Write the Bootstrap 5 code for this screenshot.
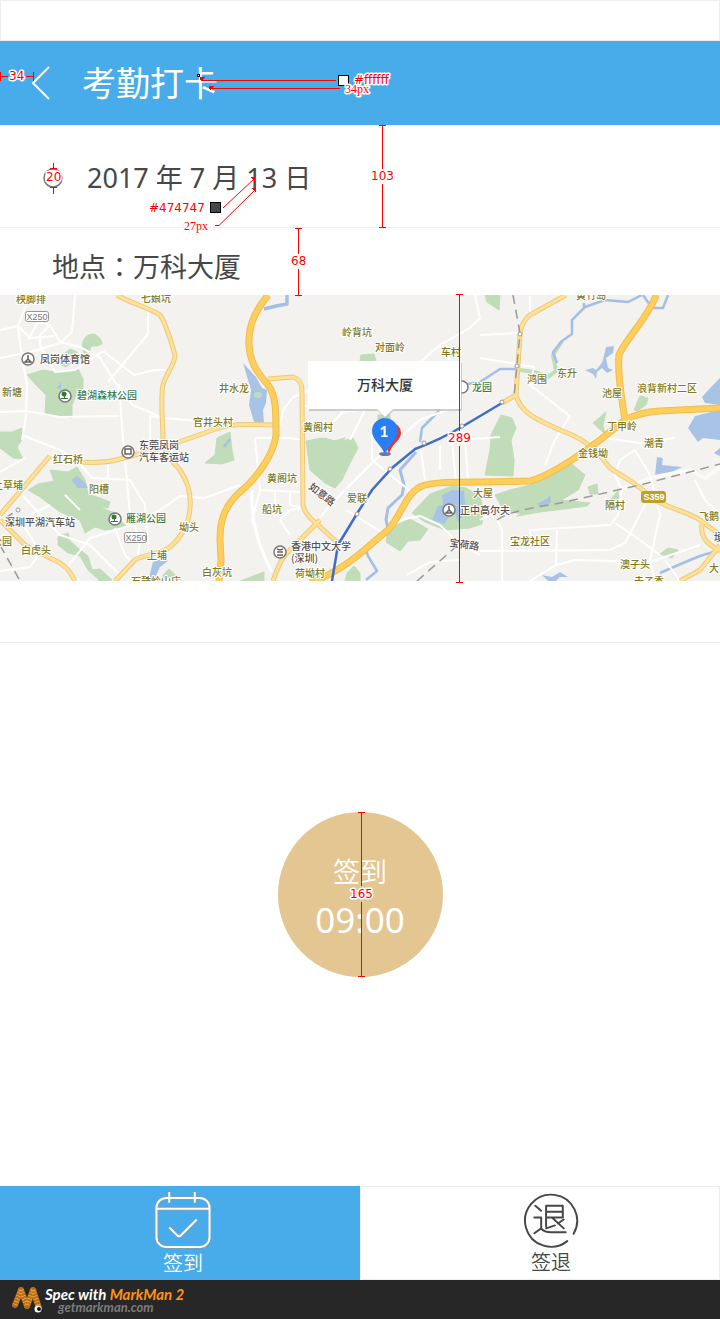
<!DOCTYPE html>
<html lang="zh-CN">
<head>
<meta charset="utf-8">
<meta name="viewport" content="width=device-width, initial-scale=1">
<title>考勤打卡</title>
<link href="https://cdn.jsdelivr.net/npm/bootstrap@5.3.0/dist/css/bootstrap.min.css" rel="stylesheet">
<style>
  body { font-family: "Noto Sans", "Noto Sans CJK SC", sans-serif; color: #474747; background: #fff; }
  .status-strip { height: 41px; border: 1px solid #eee; }
  .bg-sky { background: #49acea; color: #fff; }
  .app-bar { height: 84px; padding-left: 32px; gap: 32px; }
  .app-title { font-size: 34px; line-height: 40px; font-weight: 400; }
  .line-below { border-bottom: 1px solid #ededed; }
  .date-row { height: 103px; padding: 4px 0 0 43px; gap: 24px; }
  .place-row { height: 67px; padding: 12px 0 0 52px; }
  .row-text { font-size: 27px; line-height: 36px; font-weight: 400; }
  .mid-colon { font-family: "Noto Sans CJK TC", sans-serif; }
  .map-box .map-view { display: block; width: 100%; height: 286px; }
  .gap-row { height: 62px; }
  .punch-area { padding-bottom: 40px; }
  .punch-btn { width: 165px; height: 165px; background: #e3c692; color: #fff; border: 0; padding-top: 8px; }
  .punch-word { font-size: 27px; line-height: 44px; font-weight: 350; }
  .punch-time { font-size: 35px; line-height: 52px; font-weight: 400; }
  .tab-btn { height: 94px; border: 0; font-size: 20px; line-height: 30px; padding-top: 6px; padding-right: 2px; font-weight: 350; }
  .tab-off { background: #fff; color: #474747; border: 1px solid #eee; }
  .spec-bar { min-height: 39px; background: #272727; padding-left: 12px; gap: 2px; font-family: Lato, sans-serif; font-style: italic; font-weight: 700; }
  .spec-name { font-size: 15px; line-height: 14px; color: #fff; }
  .spec-name span { color: #ff9211; }
  .spec-link { font-size: 13px; line-height: 12px; color: #7c7c7c; padding-left: 13px; }
  .mark-layer { pointer-events: none; overflow: visible; z-index: 1; font: 12px "DejaVu Sans", sans-serif; }
  .mark-layer text { fill: #f00; stroke: #fff; stroke-width: 3px; paint-order: stroke; stroke-linejoin: round; }
  .mark-layer .size-note { font: 12px "Liberation Serif", serif; }
  .mark-layer path { stroke: #f00; fill: none; shape-rendering: crispEdges; }
  .mark-layer .slanted { shape-rendering: auto; }
  .mark-layer .tip { fill: #f00; stroke: none; }
  .village { fill: #7e7a1d; }
  .site { fill: #57504d; }
  .park { fill: #3f7b4b; }
  .map-label text { font: 500 10px "Noto Sans CJK SC", sans-serif; stroke: #fff; stroke-width: 2px; paint-order: stroke; stroke-linejoin: round; }
</style>
<script src="https://cdn.jsdelivr.net/npm/bootstrap@5.3.0/dist/js/bootstrap.bundle.min.js"></script>
</head>
<body>
<div class="d-flex flex-column min-vh-100">
  <div class="status-strip"></div>

  <header class="app-bar bg-sky d-flex align-items-center position-relative">
    <button type="button" class="btn p-0 border-0 lh-1" aria-label="返回">
      <svg width="18" height="34" viewBox="0 0 18 34" fill="none" stroke="#fff" stroke-width="2"><path d="M17 1 1 17l16 16"/></svg>
    </button>
    <h1 class="app-title m-0">考勤打卡</h1>
    <svg class="mark-layer position-absolute top-0 start-0" width="400" height="84" viewBox="0 41 400 84" aria-hidden="true">
      <path d="M0 76.500H8M26 76.500H34M.5 72V81M33.500 72V81M202 80.500H336M212 88.500H340"/>
      <path class="tip" d="M200 77h5l-4 5zM209 86h5l-4 5z"/>
      <rect x="197.500" y="74.500" width="2" height="2" fill="#fff" stroke="#000"/>
      <rect x="338.500" y="75.500" width="10" height="10" fill="#fff" stroke="#000"/>
      <text x="9" y="80">34</text>
      <text x="345" y="93" class="size-note">34px</text>
      <text x="354" y="84">#ffffff</text>
    </svg>
  </header>

  <main class="d-flex flex-column flex-grow-1">
    <section class="date-row line-below d-flex align-items-center position-relative">
      <svg width="20" height="20" viewBox="0 0 20 20" fill="none" stroke="#777" stroke-width="1.500" aria-hidden="true"><circle cx="10" cy="10" r="9"/></svg>
      <time class="row-text" datetime="2017-07-13">2017 年 7 月 13 日</time>
      <svg class="mark-layer position-absolute top-0 start-0" width="400" height="103" viewBox="0 125 400 103" aria-hidden="true">
        <path d="M53.500 163V168M50 168.500H57M50 187.500H57M53.500 188V194M382.500 125V169M382.500 184V227M379 125.500H386M379 227.500H386"/>
        <path class="slanted" d="M223 208 254 179M215 225.500H219L255 190"/>
        <path class="tip" d="M250 177h5v5zM251 188h5v5z"/>
        <rect x="210.500" y="202.500" width="10" height="10" fill="#474747" stroke="#000"/>
        <text x="46" y="181">20</text>
        <text x="371" y="180">103</text>
        <text x="149" y="212">#474747</text>
        <text x="184" y="230" class="size-note">27px</text>
      </svg>
    </section>

    <section class="place-row position-relative">
      <p class="row-text m-0 pt-2">地点<span class="mid-colon" lang="zh-TW">：</span>万科大厦</p>
      <svg class="mark-layer position-absolute top-0 start-0" width="400" height="67" viewBox="0 228 400 67" aria-hidden="true">
        <path d="M298.500 228V254M298.500 269V295M295 228.500H302M295 295.500H302"/>
        <text x="291" y="265">68</text>
      </svg>
    </section>

    <section class="map-box position-relative" aria-label="地图">
      <svg class="map-view" viewBox="0 295 720 286" preserveAspectRatio="xMidYMid slice">
        <rect y="295" width="720" height="286" fill="#f4f2ef"/>
        <g fill="#c1dcb9" stroke="#c1dcb9" stroke-linejoin="round">
          <path d="M27 375 43 370 60 373 78 369 83 379 83 388 77 393 72 405 72 418 45 415 46 395 37 386z"/>
          <path d="M82 347Q83 334 94 334 102 338 102 344 97 347 91 346L89 354 84 353z"/>
          <path d="M60 357 70 349 77 352 74 361 66 367 58 363z"/>
          <path d="M0 432 12 432 22 428 22 440 17 447 22 457 24 459 13 458 0 448z"/>
          <path d="M28 490 38 484 54 481 50 470 68 472 77 467 85 480 88 494 100 498 110 502 108 508 100 508 119 514 120 520 127 527 105 530 95 527 85 533 80 520 60 512 40 497z"/>
          <path d="M58 537 68 533 70 541 78 548 88 556 92 570 100 569 112 580 100 581 88 570 80 556 68 553 58 545z"/>
          <path d="M217 438 230 432 232 450 234 460 222 464 205 463 215 455zM163 575 169 569 182 581H163z"/>
          <path d="M306 441 322 438 340 442 353 438 358 448 349 465 342 480 335 488 325 483 310 470z"/>
          <path d="M388 529 410 519 428 529 420 540 408 541 400 551 386 542z"/>
          <path d="M412 513 430 494 452 486 466 488 480 496 483 508 482 524 470 528 445 530 425 522z"/>
          <path d="M495 495 510 490 530 485 555 470 572 464 585 475 578 490 565 498 550 505 520 514 503 509z"/>
          <path d="M517 516 560 500 590 503 587 506 540 512zM588 487 597 484 598 494 590 494zM610 500 618 491 619 500z"/>
          <path d="M491 435 501 415 512 418 516 428 511 440 514 460 513 476 485 475 490 450z"/>
          <path d="M593 423 606 412 603 425 605 434zM634 410 640 396 648 398 646 405 637 411zM485 295 500 295 499 310 487 302z"/>
          <path d="M360 361 361 355 374 354 376 361zM378 415h12v5h-12zM660 554 668 548 678 550 672 558zM345 581 347 573 354 566 360 573 360 581zM240 581 264 572 264 581z"/>
          <path d="M325 438 334 441 345 438 340 446z"/>
          <path fill="none" stroke-width="4" d="M562 341 553 355 556 371 548 377 534 372 520 370"/>
        </g>
        <g fill="#a9c3e6">
          <path d="M243 363 256 377 262 388 267 390 266 403 263 410 264 423 254 422 249 405 251 390z"/>
          <path d="M585 370 593 368 596 370 601 364 603 360 606 347 614 346 613 353 606 358 608 368 613 370 607 373 602 368 597 372 596 379 593 374z"/>
          <path d="M702 397 713 385 720 378V405L705 403zM688 428 695 416 720 410V440L703 438 698 442z"/>
          <path d="M655 475 657 457 663 458 662 465 682 467 670 473zM700 438 710 435 706 437zM537 504 548 498 550 495 551 503 540 507z"/>
          <path d="M542 575 552 577 560 572 568 577 560 577 556 581H548zM71 480 77 476 85 483 88 488 78 488zM57 388 61 382 61 390zM149 577 153 562 165 558 168 561 160 567 155 578z"/>
          <path d="M432 520 438 506 443 505 442 495 452 490 464 491 466 512 458 522 454 510 444 524zM714 453 720 448V456z"/>
        </g>
        <ellipse cx="258" cy="395" rx="4" ry="3" fill="#c1dcb9"/>
        <g fill="none" stroke="#a4bfe5" stroke-width="2.500" stroke-linejoin="round">
          <path stroke-width="3.500" d="M264 309 276 306 287 304V295"/>
          <path d="M462 385 480 382 500 369H517M557 363 553 352 562 341 572 334V320L585 307 605 300 628 302 642 295M584 308V303M643 295 652 308 663 308 668 295"/>
          <path stroke-width="3" d="M416 452 400 470 404 485 402 495 388 508 386 520 388 528"/>
          <path d="M388 533 365 547 368 556 377 571 366 580M440 410 422 428 420 442M224 447 230 439"/>
          <path d="M660 573Q685 562 700 556L720 550"/>
        </g>
        <!-- local streets -->
        <g fill="none" stroke="#fff" stroke-width="2" stroke-linejoin="round">
          <path d="M0 330 18 326 28 300 24 295M0 358 30 352 60 343 72 332 75 295M18 326 21 350 27 385 26 415 22 440M18 326 30 338 54 336M28 340 38 322 50 325 60 342 80 347 100 358 120 390 133 405 163 418 200 421M50 325 40 335 40 345 55 372 75 370 103 351 134 375 155 370 165 370M148 310V334L108 382M119 384 123 440 127 480 130 515 140 540 138 556"/>
          <path d="M0 412 26 411 60 417 119 416M163 418 150 416 150 440M22 435 60 450 78 462 92 478 130 480 145 505 148 545M108 462V480M65 495 80 510M0 472 25 458"/>
          <path d="M20 493 60 535 90 545 120 575M0 571 30 567 40 552 20 520 50 505M80 581 65 570 90 538 135 524 160 510 180 496 205 498 240 485M115 528 125 555 130 560"/>
          <path d="M308 392 293 397 283 410 280 425M303 407 320 403 345 412 365 409M303 425 330 425 345 410M365 410 350 440M303 440 290 438 255 438M255 438 260 490 300 492M275 492 276 515M290 492V505L303 508M260 490 252 520 262 550 272 572M303 545 338 550M320 518 330 505 380 455 420 420 460 405M372 435V460L415 495M346 510 383 533M303 390 308 392M303 508 290 510 280 520 290 535"/>
          <path stroke-width="3" d="M252 490Q250 530 270 568"/>
          <path d="M420 362 440 345 470 328 480 318 475 295M440 348 450 360M480 335 519 333M480 358 534 367 530 385 570 416 555 440 545 465M460 440 500 437M440 445V470M452 441 456 482M465 438 468 480M421 450 425 480"/>
          <path d="M388 530 400 520 420 516 440 525 455 540 480 555M407 575 430 562 460 560M497 520 502 530V581M532 550 530 530 610 525 618 515 622 490 615 475 620 460 635 450 650 475 660 515 650 560 655 581M615 523 640 540 660 555M480 551 610 550 625 543 650 495M557 530 556 565 530 581M556 565 575 560 650 562 700 545M695 480 705 500 720 515M480 520 500 508M680 581 665 560"/>
          <path stroke="#fafafa" stroke-width="4" d="M620 490 650 478 690 470 705 478 720 468"/>
          <path d="M598 437 640 443 675 438M530 296V315"/>
        </g>
        <!-- secondary roads: darker casing first, pale fill on top -->
        <defs>
          <g id="second-roads" fill="none" stroke-linejoin="round">
            <path d="M117 295C130 303 150 308 160 315 167 325 172 345 175 355 175 365 165 375 163 385 160 400 163 420 163 440 165 455 175 465 180 470 190 485 192 500 189 515 187 530 175 545 165 550 150 556 140 556 135 560L115 581"/>
            <path d="M0 515 50 456M80 462C95 463 110 462 120 459L160 448C185 440 205 433 215 429 230 424 240 424 275 425M0 520 25 545 52 559Q68 565 75 581"/>
            <path d="M268 379 293 377Q302 380 302 390L303 505Q305 515 316 523L340 545M320 520C300 540 290 550 285 555 278 565 275 575 273 581"/>
            <path d="M516 395C520 410 530 417 560 430 580 437 590 445 597 452L610 468C625 478 640 485 650 497 665 508 685 510 700 520L720 535M702 524C700 540 710 545 720 551M720 545 700 570 680 581M566 295 530 315Q521 322 520 335L516 395 502 403"/>
          </g>
          <g id="main-roads" fill="none">
            <path d="M268 295C256 310 248 325 249 345S260 375 268 385 276 410 276 435C274 455 255 480 240 492 222 508 220 525 220 540L221 560 219 581"/>
            <path d="M310 583C350 568 372 542 388 530 400 518 405 495 420 487 430 482 450 482 480 482L530 481C550 476 580 455 600 440L625 420Q640 412 660 411L720 408"/>
            <path d="M656 295C650 315 625 340 619 355 617 375 622 400 625 420"/>
          </g>
        </defs>
        <use href="#second-roads" stroke="#edca78" stroke-width="5"/>
        <use href="#second-roads" stroke="#fde09a" stroke-width="3"/>
        <use href="#main-roads" stroke="#f0bd4e" stroke-width="7"/>
        <use href="#main-roads" stroke="#fdce5b" stroke-width="5"/>
        <!-- railway and metro -->
        <g fill="none" stroke="#999" stroke-width="1.500" stroke-dasharray="9 6">
          <path d="M513 295 520 333 517 366 514 397M0 545 20 581M5 518 18 510M417 581 458 545M497 520C510 510 540 507 560 503L640 485 720 464"/>
        </g>
        <path d="M332 581 338 545 358 512 372 490 392 468 415 449Q440 440 465 425L502 403" fill="none" stroke="#3f6dcc" stroke-width="2.500"/>
        <g fill="#fff" stroke="#999"><circle cx="357" cy="514" r="2"/><circle cx="390" cy="469" r="2"/><circle cx="424" cy="443" r="2"/><circle cx="462" cy="426" r="2"/><circle cx="502" cy="402" r="2"/><circle cx="517" cy="366" r="2"/><circle cx="520" cy="334" r="2"/><circle cx="18" cy="510" r="2"/></g>
        <!-- places of interest -->
        <g fill="#fff" stroke="#777" stroke-width="1.500"><circle cx="28" cy="359" r="6"/><circle cx="65" cy="396" r="6"/><circle cx="128" cy="452" r="6"/><circle cx="115" cy="519" r="6"/><circle cx="280" cy="552" r="6"/><circle cx="449" cy="510" r="6"/><circle cx="462" cy="387" r="6"/></g>
        <g fill="none" stroke="#6b5f5d" stroke-width="1.500"><path d="M28 355v4l-3 3h6l-3-3M449 506v4l-3 3h6l-3-3M277 549l3 1 3-1M277 552h6M277 555h6"/><rect x="125" y="449" width="6" height="5"/></g>
        <g fill="#2f7a3c"><circle cx="64" cy="394" r="2.500"/><path d="M64 394h1v5h-1zM61 398h7v1h-7z"/><circle cx="114" cy="517" r="2.500"/><path d="M114 517h1v5h-1zM111 521h7v1h-7z"/></g>
        <g fill="#fff" stroke="#9a9595"><rect x="25.500" y="311.500" width="23" height="10" rx="2"/><rect x="124.500" y="532.500" width="22" height="10" rx="2"/></g>
        <rect x="641" y="491" width="25" height="12" rx="3" fill="#bda127"/>
        <g font-family="Liberation Sans, sans-serif" font-size="9" text-anchor="middle" fill="#777"><text x="37" y="320">X250</text><text x="136" y="541">X250</text><text x="654" y="500" fill="#fff" font-weight="700">S359</text></g>
        <g class="map-label">
          <g class="village">
            <text x="16" y="303">秧脚排</text><text x="141" y="302">七娘坑</text><text x="2" y="396">新塘</text><text x="219" y="392">井水龙</text><text x="193" y="426">官井头村</text>
            <text x="342" y="336">岭背坑</text><text x="375" y="351">对面岭</text><text x="441" y="356">车村</text><text x="303" y="431">黄阁村</text>
            <text x="576" y="299">黄竹岛</text><text x="527" y="383">鸿围</text><text x="557" y="377">东升</text><text x="602" y="397">池屋</text><text x="637" y="392">浪背新村二区</text><text x="607" y="430">丁甲岭</text><text x="644" y="447">潮青</text>
            <text x="53" y="463">红石桥</text><text x="-7" y="489">上草埔</text><text x="89" y="493">阳槽</text><text x="179" y="531">坳头</text><text x="21" y="554">白虎头</text><text x="147" y="559">上埔</text><text x="202" y="576">白灰坑</text><text x="131" y="585">石鼓岭山庄</text><text x="-8" y="545">公园</text>
            <text x="267" y="482">黄阁坑</text><text x="262" y="513">船坑</text><text x="347" y="502">爱联</text><text x="295" y="577">荷坳村</text>
            <text x="578" y="457">金钱坳</text><text x="473" y="497">大屋</text><text x="605" y="509">隔村</text><text x="699" y="520">飞鹅</text><text x="510" y="545">宝龙社区</text><text x="620" y="568">澳子头</text><text x="709" y="572">大</text><text x="634" y="585">赤子香</text>
          </g>
          <g class="site">
            <text x="40" y="363">凤岗体育馆</text><text x="139" y="449">东莞凤岗</text><text x="139" y="461">汽车客运站</text><text x="5" y="526">深圳平湖汽车站</text><text x="291" y="550">香港中文大学</text><text x="291" y="562">(深圳)</text><text x="460" y="514">正中高尔夫</text>
            <text x="308" y="488" transform="rotate(38 308 488)">如意路</text><text x="449" y="546" transform="rotate(8 449 546)">宝荷路</text><text x="714" y="541">埂</text>
          </g>
          <g class="park"><text x="77" y="399">碧湖森林公园</text><text x="126" y="522">雁湖公园</text><text x="472" y="391">龙园</text></g>
        </g>
        <!-- selected place: pins and callout -->
        <ellipse cx="385" cy="454" rx="6" ry="2" fill="#6d7ba0"/>
        <path d="M389 454C386 444 380 441 380 433a10.500 10.500 0 0 1 21 0C401 441 391 444 389 454z" fill="#e8352e"/>
        <path d="M385 455C382 445 372 440 372 431a13 13 0 0 1 26 0C398 440 388 445 385 455z" fill="#2a7ef5"/>
        <text x="384" y="437" text-anchor="middle" font-family="Lato, sans-serif" font-size="16" font-weight="700" fill="#fff">1</text>
        <path d="M309 363H462V411H393L386 419 378 411H309z" fill="#bbb" opacity=".7"/>
        <path d="M308 361H461V409H393L385 417 377 409H308z" fill="#fff"/>
        <text x="385" y="390" text-anchor="middle" font-family="Noto Sans CJK SC, sans-serif" font-size="14" font-weight="500" fill="#333">万科大厦</text>
      </svg>
      <svg class="mark-layer position-absolute top-0 start-0" width="600" height="286" viewBox="0 295 600 286" aria-hidden="true">
        <path d="M459.500 295V431M459.500 446V582M456 294.500H463M456 582.500H463"/>
        <text x="448" y="442">289</text>
      </svg>
    </section>

    <div class="gap-row line-below"></div>

    <section class="punch-area d-flex flex-grow-1 align-items-center justify-content-center">
      <div class="position-relative">
        <button type="button" class="punch-btn rounded-circle d-flex flex-column align-items-center justify-content-center">
          <span class="punch-word">签到</span>
          <span class="punch-time">09:00</span>
        </button>
        <svg class="mark-layer position-absolute top-0 start-0" width="165" height="165" viewBox="0 0 165 165" aria-hidden="true">
          <path d="M83.500 0V74M83.500 90V164M80 .5H87M80 164.500H87"/>
          <text x="72" y="86">165</text>
        </svg>
      </div>
    </section>
  </main>

  <nav class="d-flex" aria-label="考勤">
    <button type="button" class="tab-btn bg-sky w-50 ps-2 d-flex flex-column align-items-center">
      <svg width="58" height="58" viewBox="0 0 58 58" fill="none" stroke="#fff" stroke-width="2" aria-hidden="true">
        <g stroke="#8f9ba3" stroke-width="4" opacity=".6"><rect x="2" y="6" width="54" height="50" rx="10"/><path d="M2 17H56M15 0V11M41 0V11M15 36 23 44Q25 46 27 44L43 28"/></g>
        <rect x="2" y="6" width="54" height="50" rx="10"/><path d="M2 17H56M15 0V11M41 0V11M15 36 23 44Q25 46 27 44L43 28"/>
      </svg>
      <span>签到</span>
    </button>
    <button type="button" class="tab-btn tab-off w-50 ps-4 d-flex flex-column align-items-center">
      <svg width="56" height="56" viewBox="0 0 56 56" fill="none" stroke="#474747" stroke-width="2" stroke-linecap="round" stroke-linejoin="round" aria-hidden="true">
        <path d="M44.500 49A26.500 26.500 0 1 1 51 41.500"/>
        <path d="M12 13 18 18M11 25H18V36L11 41M18 36Q21 40 28 40H43M23 34V13H40V25H23M23 19H40M23 36 32 33M29 25 41 36M41 27 35 31"/>
      </svg>
      <span>签退</span>
    </button>
  </nav>

  <footer class="spec-bar d-flex align-items-center">
    <svg width="31" height="28" viewBox="0 0 31 28" fill="none" stroke-linecap="round" aria-hidden="true">
      <g stroke="#b56a15" stroke-width="6"><path d="M9 4 3 19"/><path d="M9 4 15 20"/><path d="M21 4 15 20"/><path d="M21 4 27 22"/></g>
      <g stroke="#e9a244" stroke-width="5" stroke-dasharray="1 2" stroke-linecap="butt"><path d="M9 4 3 19M9 4 15 20M21 4 15 20M21 4 27 22"/></g>
      <circle cx="26" cy="23" r="3.500" fill="#fff"/><circle cx="27" cy="23" r="2" fill="#111"/>
    </svg>
    <div>
      <div class="spec-name">Spec with <span>MarkMan 2</span></div>
      <a href="#" class="spec-link d-block text-decoration-none">getmarkman.com</a>
    </div>
  </footer>
</div>
</body>
</html>
